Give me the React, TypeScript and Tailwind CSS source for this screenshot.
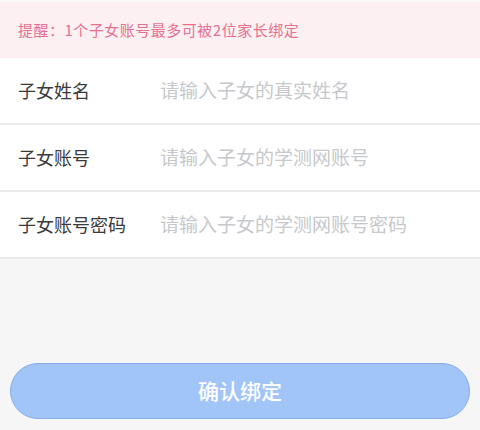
const fields = [
  { label: '子女姓名', placeholder: '请输入子女的真实姓名' },
  { label: '子女账号', placeholder: '请输入子女的学测网账号' },
  { label: '子女账号密码', placeholder: '请输入子女的学测网账号密码' },
];

export default function App() {
  return (
    <div
      className="flex h-[430px] w-[480px] flex-col bg-[#f6f6f6]"
      style={{ fontFamily: '"Noto Sans CJK SC", "Noto Sans", sans-serif' }}
    >
      <div className="h-[2px] bg-[#fafafa]" />
      {/* reminder banner */}
      <div className="flex h-[56px] items-center bg-[#fdf0f3] px-[18px] text-[15px] tracking-[0.5px] text-[#e6708f]">
        提醒：1个子女账号最多可被2位家长绑定
      </div>

      {/* form rows */}
      <div className="bg-white">
        {fields.map((f) => (
          <div key={f.label} className="flex h-[67px] items-center border-b-2 border-[#e9e9e9] px-[18px]">
            <span className="w-[142px] text-[18px] text-[#3a3a3a]">{f.label}</span>
            <input
              className="flex-1 bg-transparent text-[19px] text-[#333333] outline-none placeholder:text-[#c6c8cc]"
              placeholder={f.placeholder}
            />
          </div>
        ))}
      </div>

      <div className="flex-1" />

      <div className="px-[10px] pb-[11px]">
        <button className="flex h-[56px] w-full items-center justify-center rounded-full border border-[#86ade8] bg-[#a2c5f8] text-[21px] font-medium text-white">
          确认绑定
        </button>
      </div>
    </div>
  );
}
